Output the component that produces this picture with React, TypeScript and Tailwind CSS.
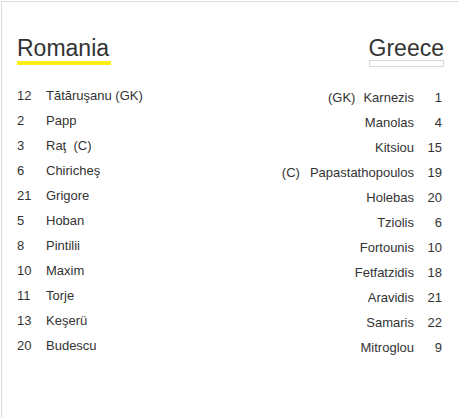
const romania: [string, string][] = [
  ["12", "Tătăruşanu (GK)"],
  ["2", "Papp"],
  ["3", "Raţ\u00a0 (C)"],
  ["6", "Chiricheş"],
  ["21", "Grigore"],
  ["5", "Hoban"],
  ["8", "Pintilii"],
  ["10", "Maxim"],
  ["11", "Torje"],
  ["13", "Keşerü"],
  ["20", "Budescu"],
];

const greece: { no: string; name: string; tag?: string; gap?: string }[] = [
  { no: "1", name: "Karnezis", tag: "(GK)", gap: "mr-[8px]" },
  { no: "4", name: "Manolas" },
  { no: "15", name: "Kitsiou" },
  { no: "19", name: "Papastathopoulos", tag: "(C)", gap: "mr-[10px]" },
  { no: "20", name: "Holebas" },
  { no: "6", name: "Tziolis" },
  { no: "10", name: "Fortounis" },
  { no: "18", name: "Fetfatzidis" },
  { no: "21", name: "Aravidis" },
  { no: "22", name: "Samaris" },
  { no: "9", name: "Mitroglou" },
];

export default function App() {
  return (
    <div
      className="w-[459px] h-[418px] bg-white pt-[1px] pl-[1px] overflow-hidden text-[#333333]"
      style={{ fontFamily: '"Liberation Sans", Arial, sans-serif' }}
    >
      <div className="h-full border-t border-l border-[#dcdcdc] pt-[34px] pl-[15px] pr-[15px] flex justify-between">
        {/* home team */}
        <div>
          <div className="inline-block">
            <h2 className="text-[23px] leading-[24px] font-normal">Romania</h2>
            <div className="h-[4px] mt-[1px] bg-[#fcee14] w-[94px]"></div>
          </div>
          <div className="mt-[18px] text-[13px]">
            {romania.map(([no, name]) => (
              <div key={no} className="flex h-[25px] leading-[25px]">
                <span className="w-[29px]">{no}</span>
                <span>{name}</span>
              </div>
            ))}
          </div>
        </div>

        {/* away team */}
        <div className="flex flex-col items-end">
          <div className="inline-block">
            <h2 className="text-[23px] leading-[24px] font-normal">Greece</h2>
            <div className="h-[7px] mt-0 border border-[#d6d6d6] bg-white"></div>
          </div>
          <div className="mt-[18px] text-[13px] pr-[2px]">
            {greece.map((p) => (
              <div key={p.no} className="flex justify-end h-[25px] leading-[25px]">
                {p.tag && <span className={p.gap}>{p.tag}</span>}
                <span>{p.name}</span>
                <span className="w-[28px] text-right">{p.no}</span>
              </div>
            ))}
          </div>
        </div>
      </div>
    </div>
  );
}
